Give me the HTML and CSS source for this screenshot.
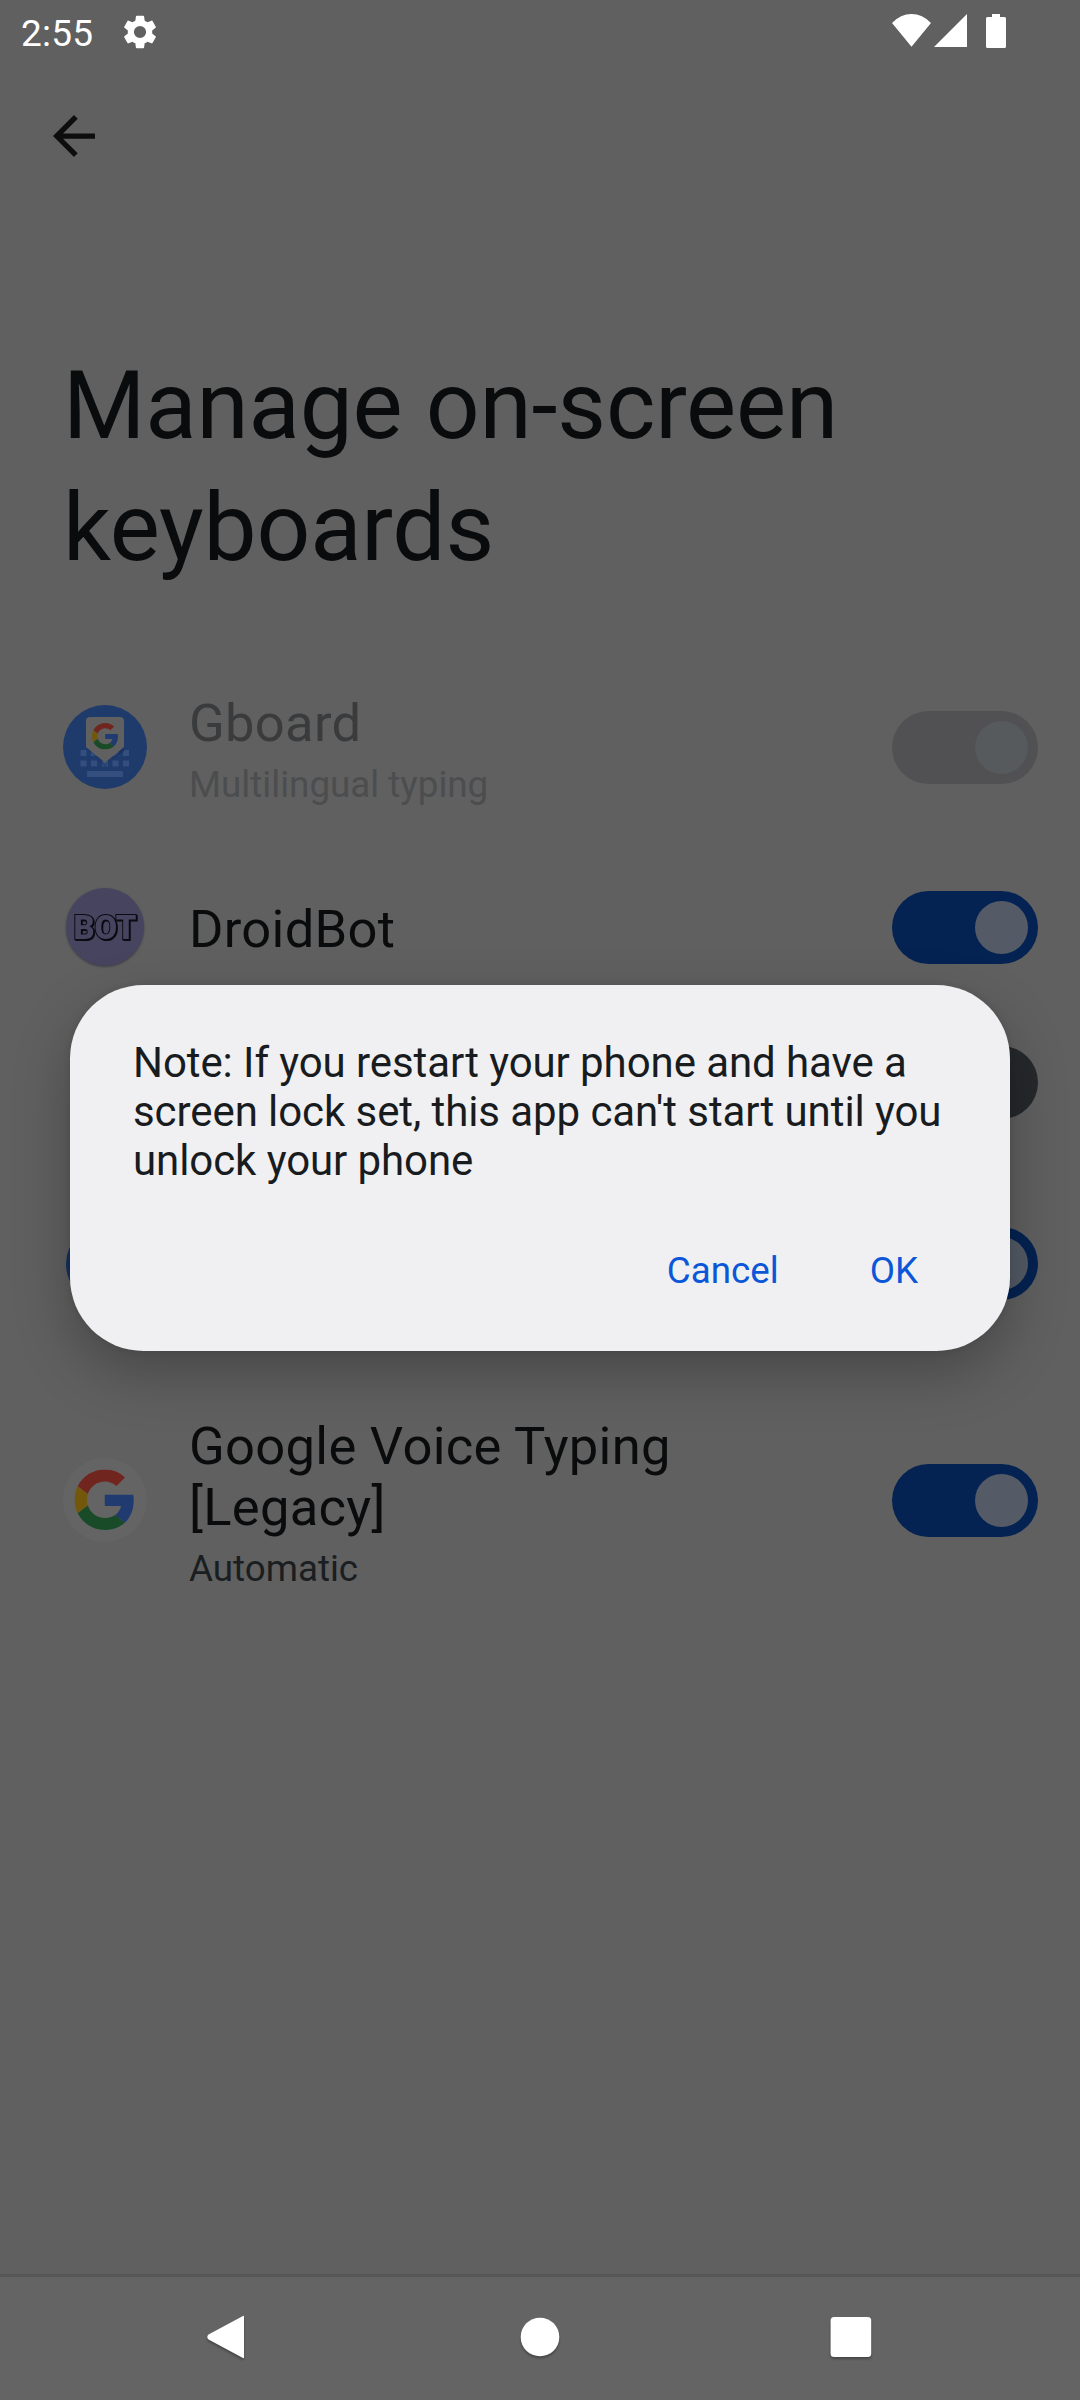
FILE: index.html
```html
<!DOCTYPE html>
<html lang="en">
<head>
<meta charset="utf-8">
<title>Manage on-screen keyboards</title>
<link rel="stylesheet" href="styles.css">
</head>
<body>
<svg class="defs" aria-hidden="true">
  <symbol id="google-g" viewBox="0 0 48 48">
    <path fill="#70251f" d="M24 9.5c3.54 0 6.71 1.22 9.21 3.6l6.85-6.85C35.9 2.38 30.47 0 24 0 14.62 0 6.51 5.38 2.56 13.22l7.98 6.19C12.43 13.72 17.74 9.5 24 9.5z"/>
    <path fill="#1f3b70" d="M46.98 24.55c0-1.57-.15-3.09-.38-4.55H24v9.02h12.94c-.58 2.96-2.26 5.48-4.78 7.18l7.73 6c4.51-4.18 7.09-10.36 7.09-17.65z"/>
    <path fill="#73580b" d="M10.53 28.59c-.48-1.45-.76-2.99-.76-4.59s.27-3.14.76-4.59l-7.98-6.19C.92 16.46 0 20.12 0 24c0 3.88.92 7.54 2.56 10.78l7.97-6.19z"/>
    <path fill="#194b28" d="M24 48c6.48 0 11.93-2.13 15.89-5.81l-7.73-6c-2.15 1.45-4.92 2.3-8.16 2.3-6.26 0-11.57-4.22-13.47-9.91l-7.98 6.19C6.51 42.62 14.62 48 24 48z"/>
  </symbol>
</svg>
<div class="screen">
  <header class="status">
    <span class="clock">2:55</span>
    <svg class="gear" viewBox="2 2 20 20"><path fill="#fff" d="M19.14 12.94c.04-.3.06-.61.06-.94s-.02-.64-.07-.94l2.03-1.58c.18-.14.23-.41.12-.61l-1.92-3.32c-.12-.22-.37-.29-.59-.22l-2.39.96c-.5-.38-1.03-.7-1.62-.94l-.36-2.54A.48.48 0 0 0 13.92 2.400h-3.840c-.24 0-.43.17-.47.41l-.36 2.540c-.59.24-1.130.57-1.620.94l-2.390-.96c-.22-.08-.47 0-.59.22L2.740 8.870c-.12.21-.08.47.12.61l2.030 1.580c-.05.3-.09.63-.09.94s.02.64.07.94l-2.030 1.580c-.18.14-.23.41-.12.61l1.920 3.320c.12.22.37.29.59.22l2.390-.96c.5.38 1.030.7 1.620.94l.36 2.540c.05.24.24.41.48.41h3.840c.24 0 .44-.17.47-.41l.36-2.540c.59-.24 1.130-.56 1.620-.94l2.390.96c.22.08.47 0 .59-.22l1.920-3.320c.12-.22.07-.47-.12-.61zM12 15.600a3.600 3.600 0 1 1 0-7.200 3.600 3.600 0 0 1 0 7.200z"/></svg>
    <svg class="indicators" viewBox="0 0 115 34">
      <path fill="#fff" d="M19.500 32.700 0 9Q8.500 0 19.500 0T39 9zM75 0v33H42zM100 0h8v3h4.500q1.500 0 1.500 1.500v28q0 1.500-1.500 1.500h-17Q94 34 94 32.500v-28Q94 3 95.500 3h4.500z"/>
    </svg>
  </header>
  <div class="toolbar">
    <svg class="back" viewBox="4 4 16 16"><path fill="#0d0d0e" d="M20 11H7.830l5.590-5.590L12 4l-8 8 8 8 1.410-1.410L7.830 13H20z"/></svg>
  </div>
  <h1 class="title">Manage on-screen<br>keyboards</h1>
  <main class="list">
    <div class="row two disabled">
      <svg class="icon" viewBox="0 0 84 84">
        <circle cx="42" cy="42" r="42" fill="#1f3b6c"/>
        <path fill="#344f7d" d="M17.500 45h6v6h-6zM28 45h6v6h-6zM49.500 45h6v6h-6zM60 45h6v6h-6zM17.500 55.500h6v6h-6zM28 55.500h6v6h-6zM39 55.500h6v6h-6zM49.500 55.500h6v6h-6zM60 55.500h6v6h-6zM24 66h36v6H24z"/>
        <path fill="#1a3361" d="M23 42 42 61l19-19v4L42 60z"/>
        <path fill="#606060" d="M27 12h30q4 0 4 4v26L42 57.500 23 42V16q0-4 4-4z"/>
        <use href="#google-g" x="29" y="18" width="26.500" height="26.500"/>
      </svg>
      <div class="label"><div class="name">Gboard</div><div class="sub">Multilingual typing</div></div>
      <div class="switch off-look"><i class="thumb"></i></div>
    </div>
    <div class="row one">
      <svg class="icon bot" viewBox="0 0 84 84">
        <circle cx="42" cy="42" r="39" fill="#46445f"/>
        <text class="bot-shade" x="11.500" y="54.500" textLength="63" lengthAdjust="spacingAndGlyphs">BOT</text>
        <text class="bot-face" x="10.500" y="53.500" textLength="63" lengthAdjust="spacingAndGlyphs">BOT</text>
      </svg>
      <div class="label"><div class="name">DroidBot</div></div>
      <div class="switch"><i class="thumb"></i></div>
    </div>
    <div class="row one unused">
      <div class="icon"></div>
      <div class="label"></div>
      <div class="switch unchecked"><i class="thumb"></i></div>
    </div>
    <div class="row two">
      <div class="icon"><span class="disc"></span></div>
      <div class="label"></div>
      <div class="switch"><i class="thumb"></i></div>
    </div>
    <div class="row three">
      <svg class="icon" viewBox="0 0 84 84">
        <circle cx="42" cy="42" r="42" fill="#646464"/>
        <use href="#google-g" x="11.500" y="11.500" width="60.500" height="60.500"/>
      </svg>
      <div class="label"><div class="name">Google Voice Typing<br>[Legacy]</div><div class="sub">Automatic</div></div>
      <div class="switch"><i class="thumb"></i></div>
    </div>
  </main>
  <nav class="nav">
    <svg viewBox="0 0 44 50"><path d="M36.500 3.200Q38 2.200 38 3.700v40.600q0 1.500-1.500.5L2.500 26.500q-2.500-2.500 0-5z"/></svg>
    <svg viewBox="0 0 44 50"><circle cx="22" cy="24" r="19.300"/></svg>
    <svg viewBox="0 0 44 50"><rect x="0.600" y="4" width="40.600" height="40" rx="3.500"/></svg>
  </nav>
</div>
<section class="dialog" role="dialog">
  <p class="message">Note: If you restart your phone and have a<br>screen lock set, this app can't start until you<br>unlock your phone</p>
  <div class="actions"><button class="action">Cancel</button><button class="action">OK</button></div>
</section>
</body>
</html>
```

FILE: styles.css
```css
* { box-sizing: border-box; }
body { margin: 0; font-family: Roboto, sans-serif; background: #606060; }
.defs { position: absolute; width: 0; height: 0; }
.screen { width: 1080px; height: 2400px; display: flex; flex-direction: column; overflow: hidden; }

.status { height: 63px; flex: none; display: flex; align-items: flex-start; padding: 14px 73px 0 21px; color: #fff; }
.clock { font-size: 37px; line-height: 40px; width: 102px; letter-spacing: .2px; }
.gear { width: 34px; height: 34px; margin-top: 1px; }
.indicators { width: 115px; height: 34px; margin-left: auto; }

.toolbar { height: 147px; flex: none; padding: 52px 0 0 53px; }
.back { width: 42px; height: 42px; display: block; }

.title { margin: 0; height: 434px; flex: none; padding: 135px 63px 0; font-size: 94.5px; line-height: 122px; letter-spacing: -.2px; font-weight: 400; color: #0a0b0c; }

.list { flex: 1; display: flex; flex-direction: column; }
.row { display: flex; align-items: center; flex: none; padding: 0 42px 0 63px; }
.one { height: 154.5px; }
.one.unused { height: 156px; }
.two { height: 206px; }
.three { height: 267.5px; }
.icon { width: 84px; height: 84px; flex: none; margin-right: 42px; display: flex; align-items: center; justify-content: center; }
.disc { width: 78px; height: 78px; border-radius: 50%; background: #17305f; }
.bot { filter: drop-shadow(0 1px 1px rgba(0, 0, 0, .35)); }
.bot-face, .bot-shade { font: 900 34px Roboto, sans-serif; stroke: #0b0b12; paint-order: stroke; stroke-width: 2px; }
.bot-face { fill: #46445f; }
.bot-shade { fill: #0b0b12; }
.label { flex: 1; padding-top: 5px; color: #0a0b0c; }
.name { font-size: 52.5px; line-height: 61.5px; letter-spacing: .3px; }
.sub { margin-top: 8px; font-size: 36.75px; line-height: 43px; color: #1a1e20; }
.disabled .name { color: #3a3b3c; }
.disabled .sub { color: #4c4d4f; }

.switch { width: 146px; height: 73px; border-radius: 37px; background: #042252; display: flex; align-items: center; justify-content: flex-end; padding-right: 10px; }
.thumb { width: 53px; height: 53px; border-radius: 50%; background: #545b66; }
.off-look { background: #515153; }
.off-look .thumb { background: #565a5c; }
.unchecked { background: #25292b; justify-content: flex-start; padding-left: 10px; }

.nav { height: 126px; flex: none; border-top: 3px solid #565656; background: #646464; display: flex; justify-content: center; align-items: flex-start; gap: 268px; padding: 36px 0 0; }
.nav svg { width: 44px; height: 50px; fill: #fff; filter: drop-shadow(0 2px 1px rgba(0, 0, 0, .3)); }

.dialog { position: absolute; left: 70px; top: 985px; width: 940px; height: 366px; border-radius: 73.5px; background: #f0f0f2; padding: 53px 63px 0; box-shadow: 0 22px 56px rgba(0, 0, 0, .26), 0 0 6px rgba(0, 0, 0, .1); display: flex; flex-direction: column; }
.message { margin: 0; font-size: 42px; line-height: 49px; letter-spacing: -.08px; color: #191c1e; white-space: nowrap; }
.actions { display: flex; justify-content: flex-end; gap: 91px; padding: 61px 29px 0 0; }
.action { border: 0; padding: 0; background: none; font: 400 36.75px/50px Roboto, sans-serif; color: #0b57d7; }
```
